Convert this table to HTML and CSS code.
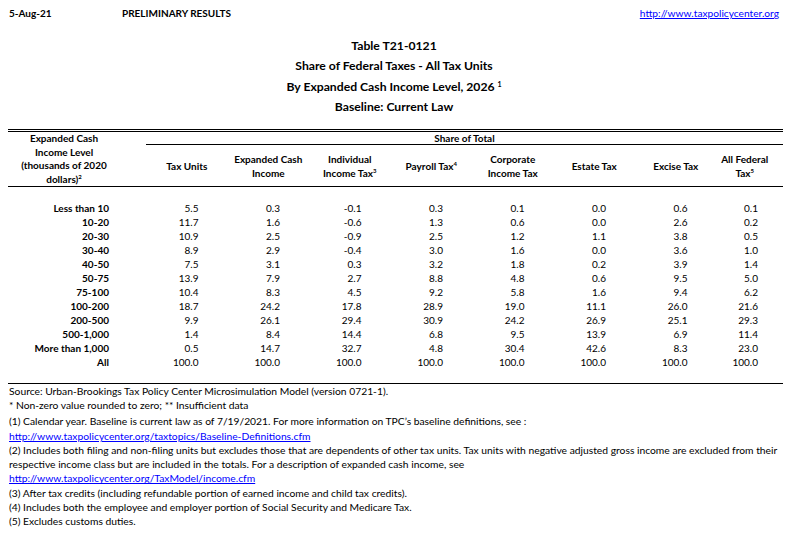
FILE: index.html
```html
<!DOCTYPE html>
<html>
<head>
<meta charset="utf-8">
<link rel="stylesheet" href="styles.css">
</head>
<body>
<div class="page">
  <div class="topbar">
    <span class="date">5-Aug-21</span>
    <span class="prelim">PRELIMINARY RESULTS</span>
    <a class="toplink" href="#">http://www.taxpolicycenter.org</a>
  </div>
  <div class="titles">
    <div class="tline">Table T21-0121</div>
    <div class="tline">Share of Federal Taxes - All Tax Units</div>
    <div class="tline">By Expanded Cash Income Level, 2026 <sup class="tsup">1</sup></div>
    <div class="tline">Baseline: Current Law</div>
  </div>

  <div class="thead">
    <div class="ha">Expanded Cash<br>Income Level<br>(thousands of 2020<br>dollars)<sup>2</sup></div>
    <div class="share">Share of Total</div>
    <div class="hc"><span>Tax Units</span></div>
    <div class="hc"><span>Expanded Cash<br>Income</span></div>
    <div class="hc"><span>Individual<br>Income Tax<sup>3</sup></span></div>
    <div class="hc"><span>Payroll Tax<sup>4</sup></span></div>
    <div class="hc"><span>Corporate<br>Income Tax</span></div>
    <div class="hc"><span>Estate Tax</span></div>
    <div class="hc"><span>Excise Tax</span></div>
    <div class="hc"><span>All Federal<br>Tax<sup>5</sup></span></div>
    <div class="hc"></div>
  </div>

  <div class="tbody">
    <div class="lbl">Less than 10</div><div class="n">5.5</div><div class="n">0.3</div><div class="n">-0.1</div><div class="n">0.3</div><div class="n">0.1</div><div class="n">0.0</div><div class="n">0.6</div><div class="n last">0.1</div><div></div>
    <div class="lbl">10-20</div><div class="n">11.7</div><div class="n">1.6</div><div class="n">-0.6</div><div class="n">1.3</div><div class="n">0.6</div><div class="n">0.0</div><div class="n">2.6</div><div class="n last">0.2</div><div></div>
    <div class="lbl">20-30</div><div class="n">10.9</div><div class="n">2.5</div><div class="n">-0.9</div><div class="n">2.5</div><div class="n">1.2</div><div class="n">1.1</div><div class="n">3.8</div><div class="n last">0.5</div><div></div>
    <div class="lbl">30-40</div><div class="n">8.9</div><div class="n">2.9</div><div class="n">-0.4</div><div class="n">3.0</div><div class="n">1.6</div><div class="n">0.0</div><div class="n">3.6</div><div class="n last">1.0</div><div></div>
    <div class="lbl">40-50</div><div class="n">7.5</div><div class="n">3.1</div><div class="n">0.3</div><div class="n">3.2</div><div class="n">1.8</div><div class="n">0.2</div><div class="n">3.9</div><div class="n last">1.4</div><div></div>
    <div class="lbl">50-75</div><div class="n">13.9</div><div class="n">7.9</div><div class="n">2.7</div><div class="n">8.8</div><div class="n">4.8</div><div class="n">0.6</div><div class="n">9.5</div><div class="n last">5.0</div><div></div>
    <div class="lbl">75-100</div><div class="n">10.4</div><div class="n">8.3</div><div class="n">4.5</div><div class="n">9.2</div><div class="n">5.8</div><div class="n">1.6</div><div class="n">9.4</div><div class="n last">6.2</div><div></div>
    <div class="lbl">100-200</div><div class="n">18.7</div><div class="n">24.2</div><div class="n">17.8</div><div class="n">28.9</div><div class="n">19.0</div><div class="n">11.1</div><div class="n">26.0</div><div class="n last">21.6</div><div></div>
    <div class="lbl">200-500</div><div class="n">9.9</div><div class="n">26.1</div><div class="n">29.4</div><div class="n">30.9</div><div class="n">24.2</div><div class="n">26.9</div><div class="n">25.1</div><div class="n last">29.3</div><div></div>
    <div class="lbl">500-1,000</div><div class="n">1.4</div><div class="n">8.4</div><div class="n">14.4</div><div class="n">6.8</div><div class="n">9.5</div><div class="n">13.9</div><div class="n">6.9</div><div class="n last">11.4</div><div></div>
    <div class="lbl">More than 1,000</div><div class="n">0.5</div><div class="n">14.7</div><div class="n">32.7</div><div class="n">4.8</div><div class="n">30.4</div><div class="n">42.6</div><div class="n">8.3</div><div class="n last">23.0</div><div></div>
    <div class="lbl">All</div><div class="n">100.0</div><div class="n">100.0</div><div class="n">100.0</div><div class="n">100.0</div><div class="n">100.0</div><div class="n">100.0</div><div class="n">100.0</div><div class="n last">100.0</div><div></div>
  </div>

  <div class="notes">
    <div>Source: Urban-Brookings Tax Policy Center Microsimulation Model (version 0721-1).</div>
    <div>* Non-zero value rounded to zero; ** Insufficient data</div>
    <div class="gap">(1) Calendar year. Baseline is current law as of 7/19/2021. For more information on TPC’s baseline definitions, see :</div>
    <div><a href="#">http://www.taxpolicycenter.org/taxtopics/Baseline-Definitions.cfm</a></div>
    <div>(2) Includes both filing and non-filing units but excludes those that are dependents of other tax units. Tax units with negative adjusted gross income are excluded from their</div>
    <div>respective income class but are included in the totals. For a description of expanded cash income, see</div>
    <div><a href="#">http://www.taxpolicycenter.org/TaxModel/income.cfm</a></div>
    <div>(3) After tax credits (including refundable portion of earned income and child tax credits).</div>
    <div>(4) Includes both the employee and employer portion of Social Security and Medicare Tax.</div>
    <div>(5) Excludes customs duties.</div>
  </div>
</div>
</body>
</html>
```

FILE: styles.css
```css
* { box-sizing: border-box; }
html, body { margin: 0; padding: 0; background: #fff; }
body {
  font-family: Lato, "Open Sans", sans-serif;
  color: #000;
  font-size: 10px;
}
a { color: #0000ff; text-decoration: underline; }

.page { width: 790px; }

.topbar {
  display: flex;
  align-items: center;
  height: 20px;
  padding: 6px 11px 0 9px;
  line-height: 14px;
  font-weight: bold;
}
.date { width: 113px; }
.toplink { margin-left: auto; font-weight: normal; font-size: 10.2px; }

.titles {
  margin: 16px 0 0 8px;
  width: 775px;
  padding-right: 3px;
  text-align: center;
  font-weight: bold;
  font-size: 12.2px;
}
.tline { height: 20.3px; line-height: 20.3px; }
.tsup { font-size: 7px; vertical-align: 4px; line-height: 0; }

sup { font-size: 6px; line-height: 0; vertical-align: 4px; }

.thead, .tbody {
  margin-left: 8px;
  width: 775px;
  display: grid;
  grid-template-columns: 138px repeat(7, 81.5px) 56.5px 10px;
}
.thead {
  margin-top: 12px;
  border-top: 3px double #000;
  border-bottom: 1px solid #000;
  grid-template-rows: 13px 41px;
  font-weight: bold;
  line-height: 13.5px;
}
.ha {
  grid-row: 1 / 3;
  grid-column: 1;
  padding-right: 26px;
  text-align: center;
}
.share {
  grid-row: 1;
  grid-column: 2 / 10;
  text-align: center;
  border-bottom: 1px solid #000;
  line-height: 12px;
  margin-right: -10px;
}
.hc {
  grid-row: 2;
  display: flex;
  align-items: center;
  justify-content: center;
  text-align: center;
  line-height: 14px;
}

.tbody {
  padding: 14px 0;
  border-bottom: 1px solid #000;
  grid-auto-rows: 14px;
  line-height: 14px;
}
.lbl {
  text-align: right;
  padding-right: 37px;
  font-weight: bold;
}
.n { text-align: right; padding-right: 29px; }
.n.last { padding-right: 15px; }

.notes {
  margin-left: 9px;
  line-height: 14.3px;
  font-size: 10.3px;
  white-space: nowrap;
}
.notes .gap { margin-top: 1.5px; }
```
